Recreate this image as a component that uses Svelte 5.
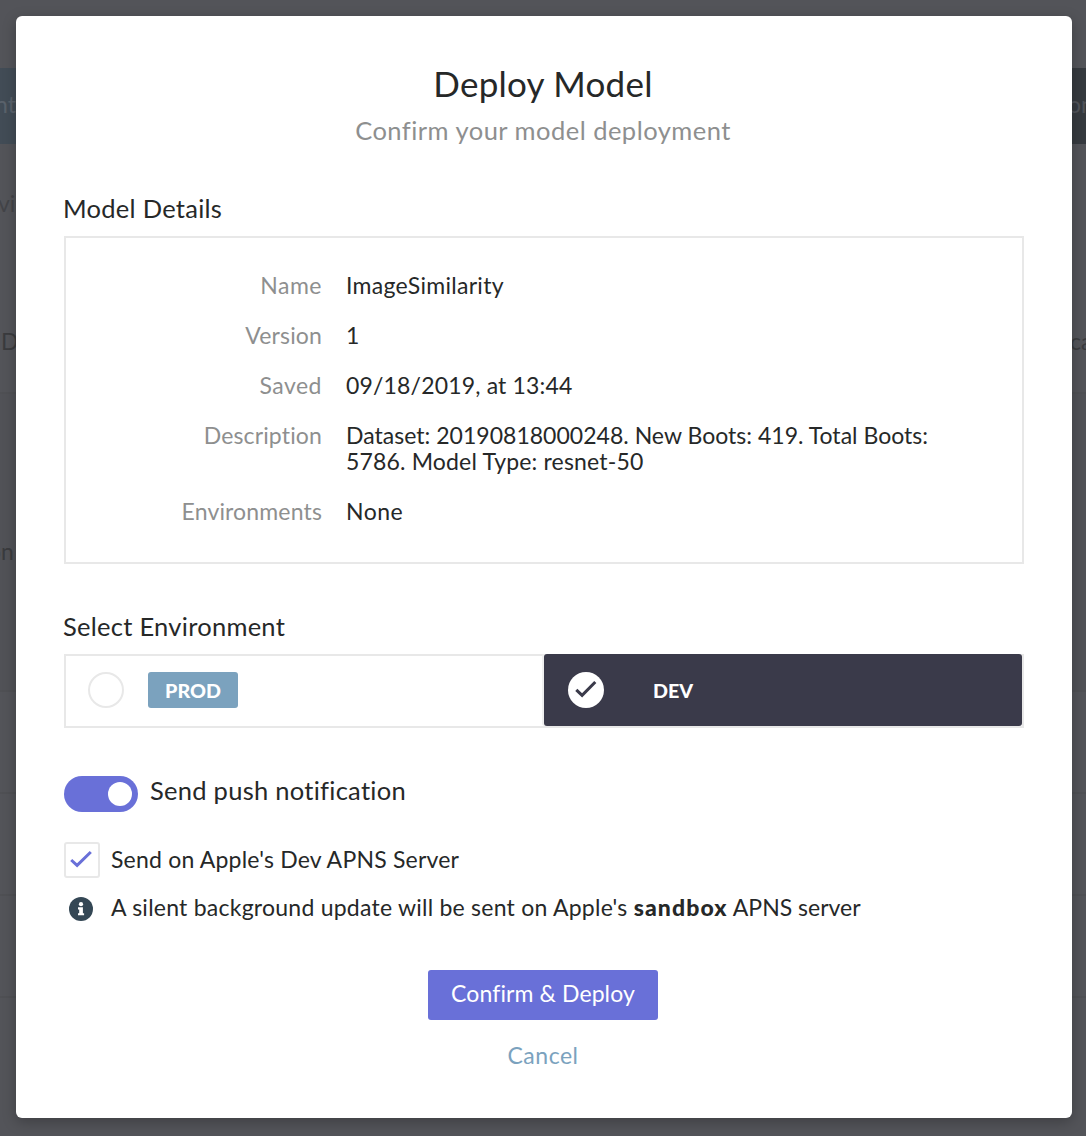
<script>
  let environment = $state('dev');
  let push = $state(true);
  let devServer = $state(true);

  const details = [
    { id: 'name', label: 'Name', lines: ['ImageSimilarity'] },
    { id: 'version', label: 'Version', lines: ['1'] },
    { id: 'saved', label: 'Saved', lines: ['09/18/2019, at 13:44'] },
    {
      id: 'description',
      label: 'Description',
      lines: ['Dataset: 20190818000248. New Boots: 419. Total Boots:', '5786. Model Type: resnet-50'],
    },
    { id: 'environments', label: 'Environments', lines: ['None'] },
  ];
</script>

<div class="page">
  <div class="backdrop" aria-hidden="true">
    <div class="tabs"><span class="tab left">nt</span><span class="tab right">on</span></div>
    <span class="ghost faint g-vi">vi</span>
    <span class="ghost g-d">D</span>
    <span class="ghost g-ca">ca</span>
    <span class="ghost g-on">on</span>
    <div class="table">
      <i class="band"></i><i class="row"></i><i class="row"></i><i class="row"></i><i class="row"></i>
    </div>
  </div>

  <main class="modal">
    <h1>Deploy Model</h1>
    <p class="subtitle">Confirm your model deployment</p>

    <h2>Model Details</h2>
    <dl class="details">
      {#each details as item}
        <dt class={item.id}>{item.label}</dt>
        <dd class={item.id}>
          {#each item.lines as line}<span class="line">{line}</span>{/each}
        </dd>
      {/each}
    </dl>

    <h2>Select Environment</h2>
    <div class="envs">
      <button class="env" class:active={environment === 'prod'} onclick={() => (environment = 'prod')}>
        <span class="radio">
          {#if environment === 'prod'}<svg viewBox="0 0 36 36"><path d="M8.3 17.8l5.8 5.6L27.3 10" /></svg>{/if}
        </span>
        <span class="tag prod">PROD</span>
      </button>
      <button class="env" class:active={environment === 'dev'} onclick={() => (environment = 'dev')}>
        <span class="radio">
          {#if environment === 'dev'}<svg viewBox="0 0 36 36"><path d="M8.3 17.8l5.8 5.6L27.3 10" /></svg>{/if}
        </span>
        <span class="tag dev">DEV</span>
      </button>
    </div>

    <div class="option push">
      <button class="switch" class:on={push} aria-label="Send push notification" onclick={() => (push = !push)}><i></i></button>
      <span class="push-label">Send push notification</span>
    </div>

    <div class="option server">
      <button class="check" aria-label="Dev server" onclick={() => (devServer = !devServer)}>
        {#if devServer}<svg viewBox="0 0 32 32"><path d="M5.2 16l5.9 5.4L24.8 8" /></svg>{/if}
      </button>
      <span class="server-label">Send on Apple's Dev APNS Server</span>
    </div>

    <div class="option note">
      <svg class="info" viewBox="0 0 24 24">
        <circle cx="12" cy="12" r="12" fill="#344755" />
        <circle cx="12" cy="7.2" r="2.1" fill="#fff" />
        <path d="M9 10.3h4.9v5.9h1.2v2.1H9v-2.1h1.2v-3.8H9z" fill="#fff" />
      </svg>
      <span class="note-label">A silent background update will be sent on Apple's <b>sandbox</b> <span class="tail">APNS server</span></span>
    </div>

    <button class="confirm">Confirm &amp; Deploy</button>
    <button class="cancel">Cancel</button>
  </main>
</div>

<style>
  :global(body) {
    margin: 0;
    background: #535459;
  }

  .page {
    position: relative;
    box-sizing: border-box;
    width: 1086px;
    height: 1136px;
    padding: 16px 14px 18px 16px;
    overflow: hidden;
    background: #535459;
    color: #262828;
    font-family: Lato, "Open Sans", sans-serif;
    font-size: 23px;
    line-height: 26px;
    font-variant-ligatures: none;
  }

  .backdrop {
    position: absolute;
    inset: 0;
  }
  .tabs {
    display: flex;
    justify-content: space-between;
    margin-top: 68px;
    height: 76px;
    line-height: 73px;
  }
  .tab {
    width: 543px;
    box-sizing: border-box;
    color: #5a626b;
  }
  .tab.left {
    background: #424c56;
    text-indent: -5px;
  }
  .tab.right {
    background: #363a3f;
    color: #505359;
    padding-left: 525px;
    white-space: nowrap;
  }
  .ghost {
    position: absolute;
    color: #3a3b3e;
  }
  .faint {
    color: #434448;
  }
  .g-vi { left: -2px; top: 190px; }
  .g-d { left: 1px; top: 328px; }
  .g-ca { left: 1070px; top: 328px; }
  .g-on { left: -12px; top: 538px; }
  .table {
    margin-top: 248px;
  }
  .band,
  .row {
    display: block;
    height: 100px;
    border-top: 2px solid #4f5054;
  }
  .band {
    height: 296px;
    background: #515257;
  }

  .modal {
    position: relative;
    box-sizing: border-box;
    height: 1102px;
    padding: 45px 50px 0 48px;
    display: flex;
    flex-direction: column;
    border-radius: 6px;
    background: #fff;
    box-shadow: 0 4px 14px rgba(0, 0, 0, 0.25);
  }

  h1,
  h2,
  p,
  dl,
  dd {
    margin: 0;
    font-weight: 400;
  }
  button {
    padding: 0;
    border: 0;
    font: inherit;
    color: inherit;
    background: none;
    white-space: nowrap;
  }
  h1 {
    text-align: center;
    font-size: 35px;
    line-height: 44px;
    letter-spacing: 0.25px;
  }
  .subtitle {
    margin-top: 9px;
    text-align: center;
    font-size: 25.5px;
    line-height: 32px;
    letter-spacing: 0.48px;
    color: #8e8f8f;
  }
  h2 {
    margin: 46px 0 0 -1px;
    font-size: 25.5px;
    line-height: 32px;
    letter-spacing: 0.27px;
    white-space: nowrap;
  }

  .details {
    box-sizing: border-box;
    width: 960px;
    height: 328px;
    margin-top: 12px;
    padding: 34px 0 0;
    border: 2px solid #e8e8e8;
    display: grid;
    grid-template-columns: 256px 1fr;
    column-gap: 24px;
    row-gap: 24px;
    align-content: start;
  }
  dt {
    text-align: right;
    letter-spacing: 0.15px;
    color: #8e8f8f;
  }
  dt.name,
  dt.saved {
    letter-spacing: 0.5px;
  }
  dd.name {
    letter-spacing: 0.3px;
  }
  dd.saved {
    letter-spacing: 0.17px;
  }
  dd.description {
    letter-spacing: 0.02px;
  }
  dd.description .line:last-child {
    letter-spacing: 0.17px;
  }
  dd.environments {
    letter-spacing: 0.5px;
  }
  .line {
    display: block;
    white-space: nowrap;
  }

  .envs {
    box-sizing: border-box;
    width: 960px;
    height: 74px;
    margin-top: 12px;
    display: grid;
    grid-template-columns: 480px 478px;
    border: 2px solid #e8e8e8;
  }
  .env {
    display: flex;
    align-items: center;
    gap: 24px;
    width: 478px;
    height: 72px;
    margin: -2px 0 0 -2px;
    padding-left: 24px;
    border-radius: 3px;
  }
  .env.active {
    background: #3a3a4a;
    box-shadow: -2px 0 0 #efefef;
  }
  .radio {
    box-sizing: border-box;
    width: 36px;
    height: 36px;
    border: 2px solid #e8e8e8;
    border-radius: 50%;
  }
  .active .radio {
    border: 0;
    background: #fff;
  }
  svg {
    display: block;
  }
  .radio path {
    fill: none;
    stroke: #3a3a4a;
    stroke-width: 3;
  }
  .tag {
    width: 90px;
    height: 36px;
    border-radius: 3px;
    text-align: center;
    font-size: 19.7px;
    font-weight: 900;
    line-height: 37px;
    color: #fff;
  }
  .prod {
    background: #7ba2be;
  }

  .option {
    display: flex;
    height: 36px;
    line-height: 36px;
    white-space: nowrap;
  }
  .push {
    margin-top: 48px;
    gap: 12px;
    font-size: 25.5px;
    line-height: 28px;
    letter-spacing: 0.27px;
  }
  .switch {
    box-sizing: border-box;
    display: flex;
    width: 74px;
    height: 36px;
    padding: 6px;
    border-radius: 18px;
    background: #d8d8d8;
  }
  .switch.on {
    justify-content: flex-end;
    background: #6970d8;
  }
  .switch i {
    width: 24px;
    height: 24px;
    border-radius: 50%;
    background: #fff;
  }
  .server {
    margin-top: 30px;
    gap: 11px;
    line-height: 34px;
    letter-spacing: 0.2px;
  }
  .check {
    box-sizing: border-box;
    width: 36px;
    height: 36px;
    border: 2px solid #e8e8e8;
    border-radius: 3px;
  }
  .check path {
    fill: none;
    stroke: #6970d8;
    stroke-width: 3;
  }
  .note {
    margin-top: 11px;
    padding-left: 5px;
    gap: 18px;
    line-height: 36px;
    letter-spacing: 0.24px;
  }
  .info {
    width: 24px;
    height: 24px;
    margin-top: 8px;
  }
  b {
    font-weight: 900;
    letter-spacing: 1.1px;
  }
  .note .tail {
    margin-left: -1px;
    letter-spacing: 0;
  }
  .confirm {
    align-self: center;
    width: 230px;
    height: 50px;
    margin-top: 45px;
    padding-bottom: 4px;
    border-radius: 3px;
    background: #6970d8;
    color: #fff;
    letter-spacing: 0.1px;
  }
  .cancel {
    align-self: center;
    height: 26px;
    margin-top: 22px;
    color: #7ba2be;
    letter-spacing: 0.5px;
  }
</style>
